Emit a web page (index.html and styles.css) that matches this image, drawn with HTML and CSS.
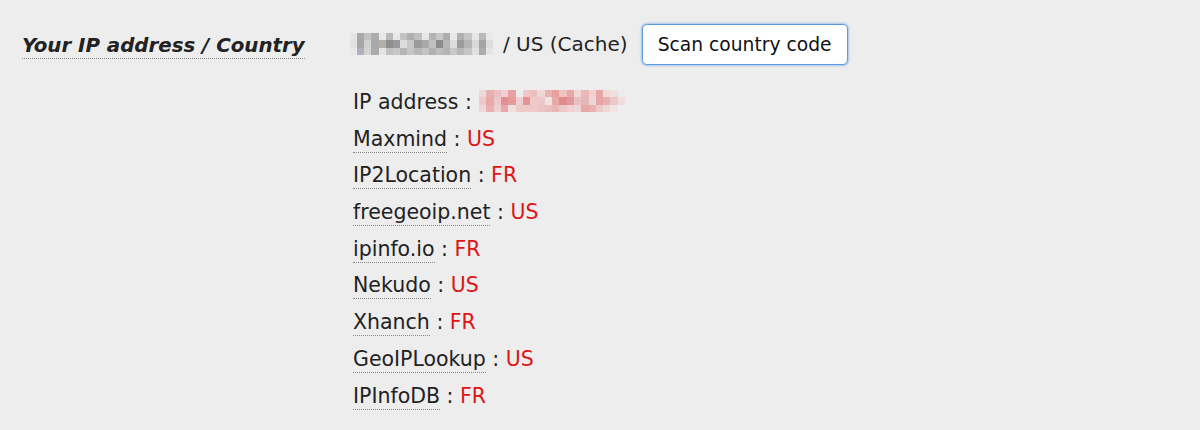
FILE: index.html
```html
<!DOCTYPE html>
<html>
<head>
<meta charset="utf-8">
<link rel="stylesheet" href="styles.css">
</head>
<body>
<div class="form">
  <div class="label"><span class="dotted">Your IP address / Country</span></div>
  <div class="value">
    <div class="first">
      <svg class="blur gray" width="143" height="22" viewBox="0 0 20 3" preserveAspectRatio="none" shape-rendering="crispEdges">
        <rect x="0" y="0" width="1.05" height="1.05" fill="#e6e6e8"/><rect x="1" y="0" width="1.05" height="1.05" fill="#a9a9a9"/><rect x="2" y="0" width="1.05" height="1.05" fill="#c2c2c2"/><rect x="3" y="0" width="1.05" height="1.05" fill="#adadad"/><rect x="4" y="0" width="1.05" height="1.05" fill="#e9e9e9"/><rect x="5" y="0" width="1.05" height="1.05" fill="#b8b8b8"/><rect x="6" y="0" width="1.05" height="1.05" fill="#e8e8e8"/><rect x="7" y="0" width="1.05" height="1.05" fill="#c4c4c4"/><rect x="8" y="0" width="1.05" height="1.05" fill="#b0b0b0"/><rect x="9" y="0" width="1.05" height="1.05" fill="#c0c0c0"/><rect x="10" y="0" width="1.05" height="1.05" fill="#e6e6e6"/><rect x="11" y="0" width="1.05" height="1.05" fill="#b4b4b4"/><rect x="12" y="0" width="1.05" height="1.05" fill="#c8c8c8"/><rect x="13" y="0" width="1.05" height="1.05" fill="#adadad"/><rect x="14" y="0" width="1.05" height="1.05" fill="#e8e8e8"/><rect x="15" y="0" width="1.05" height="1.05" fill="#b0b0b0"/><rect x="16" y="0" width="1.05" height="1.05" fill="#c4c4c4"/><rect x="17" y="0" width="1.05" height="1.05" fill="#e6e6e6"/><rect x="18" y="0" width="1.05" height="1.05" fill="#b8b8b8"/><rect x="19" y="0" width="1" height="1.05" fill="#e8e8e8"/>
        <rect x="0" y="1" width="1.05" height="1.05" fill="#e2e2e4"/><rect x="1" y="1" width="1.05" height="1.05" fill="#a6a6a6"/><rect x="2" y="1" width="1.05" height="1.05" fill="#d0d0d0"/><rect x="3" y="1" width="1.05" height="1.05" fill="#a8a8a8"/><rect x="4" y="1" width="1.05" height="1.05" fill="#b4b0a8"/><rect x="5" y="1" width="1.05" height="1.05" fill="#8f8f8f"/><rect x="6" y="1" width="1.05" height="1.05" fill="#9a9a9a"/><rect x="7" y="1" width="1.05" height="1.05" fill="#dcdcdc"/><rect x="8" y="1" width="1.05" height="1.05" fill="#c8c8c8"/><rect x="9" y="1" width="1.05" height="1.05" fill="#9a9a9a"/><rect x="10" y="1" width="1.05" height="1.05" fill="#a8a8a8"/><rect x="11" y="1" width="1.05" height="1.05" fill="#c0c0c0"/><rect x="12" y="1" width="1.05" height="1.05" fill="#8c8c8c"/><rect x="13" y="1" width="1.05" height="1.05" fill="#b8b8b8"/><rect x="14" y="1" width="1.05" height="1.05" fill="#dcdcdc"/><rect x="15" y="1" width="1.05" height="1.05" fill="#9c9c9c"/><rect x="16" y="1" width="1.05" height="1.05" fill="#b4b4b4"/><rect x="17" y="1" width="1.05" height="1.05" fill="#dadada"/><rect x="18" y="1" width="1.05" height="1.05" fill="#a4a4a4"/><rect x="19" y="1" width="1" height="1.05" fill="#dcdcdc"/>
        <rect x="0" y="2" width="1.05" height="1" fill="#e8e8ea"/><rect x="1" y="2" width="1.05" height="1" fill="#b0b0b8"/><rect x="2" y="2" width="1.05" height="1" fill="#d4d4d4"/><rect x="3" y="2" width="1.05" height="1" fill="#acacac"/><rect x="4" y="2" width="1.05" height="1" fill="#e4e4e4"/><rect x="5" y="2" width="1.05" height="1" fill="#c0c0c0"/><rect x="6" y="2" width="1.05" height="1" fill="#c8c8c8"/><rect x="7" y="2" width="1.05" height="1" fill="#b4b4b4"/><rect x="8" y="2" width="1.05" height="1" fill="#c6c6c6"/><rect x="9" y="2" width="1.05" height="1" fill="#b8b8b8"/><rect x="10" y="2" width="1.05" height="1" fill="#c4c4c4"/><rect x="11" y="2" width="1.05" height="1" fill="#b0b0b0"/><rect x="12" y="2" width="1.05" height="1" fill="#bcbcbc"/><rect x="13" y="2" width="1.05" height="1" fill="#b4b4b4"/><rect x="14" y="2" width="1.05" height="1" fill="#c8c8c8"/><rect x="15" y="2" width="1.05" height="1" fill="#b8b8b8"/><rect x="16" y="2" width="1.05" height="1" fill="#c4c4c4"/><rect x="17" y="2" width="1.05" height="1" fill="#e0e0e0"/><rect x="18" y="2" width="1.05" height="1" fill="#acacac"/><rect x="19" y="2" width="1" height="1" fill="#e4e4e4"/>
      </svg>
      <span class="cache">/ US (Cache)</span>
      <button class="btn">Scan country code</button>
    </div>
    <ul class="list">
      <li class="ip">IP address : <svg class="blur red" width="146" height="22" viewBox="0 0 20 3" preserveAspectRatio="none" shape-rendering="crispEdges">
          <rect x="0" y="0" width="1.05" height="1.05" fill="#ecdada"/><rect x="1" y="0" width="1.05" height="1.05" fill="#e8b0b0"/><rect x="2" y="0" width="1.05" height="1.05" fill="#ecc0c0"/><rect x="3" y="0" width="1.05" height="1.05" fill="#f0d0d0"/><rect x="4" y="0" width="1.05" height="1.05" fill="#e8a0a0"/><rect x="5" y="0" width="1.05" height="1.05" fill="#ececec"/><rect x="6" y="0" width="1.05" height="1.05" fill="#f0c8c8"/><rect x="7" y="0" width="1.05" height="1.05" fill="#ecc0c0"/><rect x="8" y="0" width="1.05" height="1.05" fill="#eed8d8"/><rect x="9" y="0" width="1.05" height="1.05" fill="#e8b0b0"/><rect x="10" y="0" width="1.05" height="1.05" fill="#e8a0a0"/><rect x="11" y="0" width="1.05" height="1.05" fill="#ecc4c4"/><rect x="12" y="0" width="1.05" height="1.05" fill="#e8a8a8"/><rect x="13" y="0" width="1.05" height="1.05" fill="#eed8d8"/><rect x="14" y="0" width="1.05" height="1.05" fill="#ecb8b8"/><rect x="15" y="0" width="1.05" height="1.05" fill="#f0d0d0"/><rect x="16" y="0" width="1.05" height="1.05" fill="#e8a8a8"/><rect x="17" y="0" width="1.05" height="1.05" fill="#f0dada"/><rect x="18" y="0" width="1.05" height="1.05" fill="#eee0e0"/><rect x="19" y="0" width="1" height="1.05" fill="#ececec"/>
          <rect x="0" y="1" width="1.05" height="1.05" fill="#ecc8c8"/><rect x="1" y="1" width="1.05" height="1.05" fill="#e8a8a8"/><rect x="2" y="1" width="1.05" height="1.05" fill="#eccaca"/><rect x="3" y="1" width="1.05" height="1.05" fill="#e49090"/><rect x="4" y="1" width="1.05" height="1.05" fill="#e89a9a"/><rect x="5" y="1" width="1.05" height="1.05" fill="#eed0d0"/><rect x="6" y="1" width="1.05" height="1.05" fill="#e49494"/><rect x="7" y="1" width="1.05" height="1.05" fill="#f0c8c8"/><rect x="8" y="1" width="1.05" height="1.05" fill="#ecc8c8"/><rect x="9" y="1" width="1.05" height="1.05" fill="#eee4e4"/><rect x="10" y="1" width="1.05" height="1.05" fill="#e8a8a8"/><rect x="11" y="1" width="1.05" height="1.05" fill="#e08c8c"/><rect x="12" y="1" width="1.05" height="1.05" fill="#e09898"/><rect x="13" y="1" width="1.05" height="1.05" fill="#eac0c0"/><rect x="14" y="1" width="1.05" height="1.05" fill="#e4b8b8"/><rect x="15" y="1" width="1.05" height="1.05" fill="#eed6d6"/><rect x="16" y="1" width="1.05" height="1.05" fill="#e8a4a4"/><rect x="17" y="1" width="1.05" height="1.05" fill="#e8b0b0"/><rect x="18" y="1" width="1.05" height="1.05" fill="#ecc8c8"/><rect x="19" y="1" width="1" height="1.05" fill="#eedede"/>
          <rect x="0" y="2" width="1.05" height="1" fill="#eed8d8"/><rect x="1" y="2" width="1.05" height="1" fill="#e8b0b0"/><rect x="2" y="2" width="1.05" height="1" fill="#eed0d0"/><rect x="3" y="2" width="1.05" height="1" fill="#e8a8a8"/><rect x="4" y="2" width="1.05" height="1" fill="#f0e0e0"/><rect x="5" y="2" width="1.05" height="1" fill="#eccaca"/><rect x="6" y="2" width="1.05" height="1" fill="#eccaca"/><rect x="7" y="2" width="1.05" height="1" fill="#f0c8c8"/><rect x="8" y="2" width="1.05" height="1" fill="#ecc4c4"/><rect x="9" y="2" width="1.05" height="1" fill="#eac0c0"/><rect x="10" y="2" width="1.05" height="1" fill="#e8b8b8"/><rect x="11" y="2" width="1.05" height="1" fill="#ecc8c8"/><rect x="12" y="2" width="1.05" height="1" fill="#f0d0d0"/><rect x="13" y="2" width="1.05" height="1" fill="#ecd8d8"/><rect x="14" y="2" width="1.05" height="1" fill="#e8a8a8"/><rect x="15" y="2" width="1.05" height="1" fill="#e8b0b0"/><rect x="16" y="2" width="1.05" height="1" fill="#eccaca"/><rect x="17" y="2" width="1.05" height="1" fill="#eed8d8"/><rect x="18" y="2" width="1.05" height="1" fill="#f0e4e4"/><rect x="19" y="2" width="1" height="1" fill="#eeeeee"/>
        </svg></li>
      <li><span class="dotted">Maxmind</span> : <span class="cc">US</span></li>
      <li><span class="dotted">IP2Location</span> : <span class="cc">FR</span></li>
      <li><span class="dotted">freegeoip.net</span> : <span class="cc">US</span></li>
      <li><span class="dotted">ipinfo.io</span> : <span class="cc">FR</span></li>
      <li><span class="dotted">Nekudo</span> : <span class="cc">US</span></li>
      <li><span class="dotted">Xhanch</span> : <span class="cc">FR</span></li>
      <li><span class="dotted">GeoIPLookup</span> : <span class="cc">US</span></li>
      <li><span class="dotted">IPInfoDB</span> : <span class="cc">FR</span></li>
    </ul>
  </div>
</div>
</body>
</html>
```
FILE: styles.css
```css
html, body {
  margin: 0;
  padding: 0;
  background: #ededed;
}
body {
  font-family: "DejaVu Sans", Verdana, sans-serif;
  color: #222;
  font-size: 20px;
}
.form {
  display: grid;
  grid-template-columns: 353px 1fr;
  padding-top: 23px;
}
.label {
  padding-left: 22px;
  padding-top: 2px;
  font-weight: bold;
  font-style: italic;
  font-size: 19.8px;
  line-height: 42px;
}
.dotted {
  border-bottom: 1px dotted #888;
  padding-bottom: 1px;
}
.first {
  display: flex;
  align-items: center;
  height: 42px;
}
.blur {
  display: block;
  flex: none;
}
.gray {
  margin-left: -3px;
}
.cache {
  margin-left: 10px;
}
.btn {
  margin-left: 14px;
  width: 206px;
  height: 41px;
  font-family: inherit;
  font-size: 18.7px;
  color: #111;
  background: #fff;
  border: 1px solid #5b9be0;
  border-radius: 5px;
  box-shadow: 0 0 2px 1px rgba(110, 160, 230, 0.55);
  padding: 0;
}
.list {
  list-style: none;
  margin: 19px 0 0;
  padding: 0;
  font-size: 20.5px;
}
.list li {
  line-height: 36.7px;
  height: 36.7px;
  white-space: nowrap;
}
.list .red {
  display: inline-block;
  vertical-align: middle;
  margin-left: 1px;
  position: relative;
  top: -2px;
}
.cc {
  color: #dd1515;
}
```
